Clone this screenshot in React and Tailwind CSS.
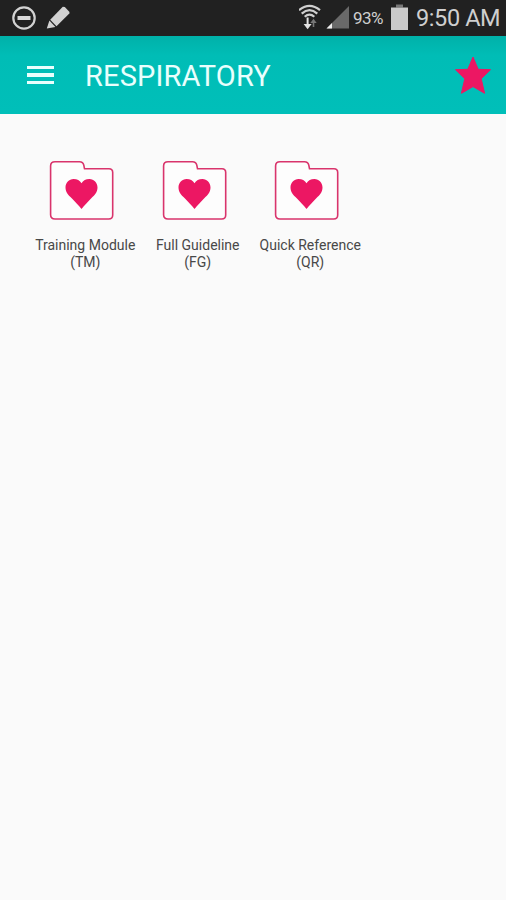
const folders = [
  { name: "Training Module", code: "TM" },
  { name: "Full Guideline", code: "FG" },
  { name: "Quick Reference", code: "QR" },
];

function StatusBar() {
  return (
    <div className="flex h-9 items-center bg-[#212121] text-[#cfcfcf]">
      <svg className="ml-[11px]" width="26" height="36" viewBox="0 0 26 36" fill="none">
        <circle cx="13" cy="18" r="10.7" stroke="#d2d2d2" strokeWidth="2.2" />
        <rect x="6.5" y="16" width="13" height="4" fill="#d8d8d8" />
      </svg>
      <svg className="ml-[9px]" width="26" height="36" viewBox="0 0 26 36" fill="#d2d2d2">
        <path d="M16.8 6.8 L18.8 7 L23.5 12 L23.3 13.5 L10.5 26.2 L4.2 19.8 Z" />
        <path d="M3.4 20.6 L9.4 27 L0.8 28.4 Z" />
      </svg>
      <svg className="ml-auto" width="23" height="36" viewBox="0 0 23 36" fill="none">
        <path d="M0 10.2 Q10.5 1.5 21 10.2" stroke="#d0d0d0" strokeWidth="2.2" />
        <path d="M2.7 13.6 Q10.5 6.8 18.3 13.6" stroke="#d0d0d0" strokeWidth="2.2" />
        <path d="M5.7 16.7 Q10.5 12.4 15.3 16.7" stroke="#d0d0d0" strokeWidth="2.2" />
        <path d="M8.6 17.5 V25" stroke="#e4e4e4" strokeWidth="2" />
        <path d="M4.6 24 H12.6 L8.6 29.3 Z" fill="#e4e4e4" />
        <path d="M14.5 27 V21" stroke="#777777" strokeWidth="1.6" />
        <path d="M11.3 23 H17.7 L14.5 18.8 Z" fill="#777777" />
      </svg>
      <svg className="ml-[4px]" width="24" height="36" viewBox="0 0 24 36">
        <path d="M23 6 V28.5 H0.5 Z" fill="#696969" />
        <path d="M6 23 V28.5 H0.5 Z" fill="#eeeeee" />
      </svg>
      <span className="ml-[3px] w-[33px] pt-px text-[17px] tracking-[-0.5px] whitespace-nowrap">93%</span>
      <svg className="ml-[4px]" width="19" height="36" viewBox="0 0 19 36">
        <rect x="6" y="4.5" width="7" height="3" fill="#777777" />
        <rect x="1" y="7.5" width="17" height="22.5" fill="#cacaca" />
      </svg>
      <span className="ml-[7px] w-[90px] pt-px text-[23.5px] tracking-[-0.4px] whitespace-nowrap">9:50 AM</span>
    </div>
  );
}

function Header() {
  return (
    <header className="flex h-[78px] items-center bg-linear-to-b from-[#00b1a9] via-[#00bdb6] via-25% to-[#00bfb9]">
      <button className="ml-[26.5px] flex w-[27px] flex-col gap-1" aria-label="Menu">
        <span className="h-[3.5px] w-full bg-[#e9fffd]" />
        <span className="h-[3.5px] w-full bg-[#e9fffd]" />
        <span className="h-[3.5px] w-full bg-[#e9fffd]" />
      </button>
      <h1 className="ml-[31.5px] pt-[3px] text-[29px] leading-none tracking-[0.15px] text-[#e9fffd]">RESPIRATORY</h1>
      <svg className="mr-[14px] ml-auto" width="38" height="42" viewBox="0 0 38 42">
        <path
          d="M19 3 L24.2 15.3 L36.5 15.7 L27.2 24.8 L30.6 39.3 L19 32.6 L7.4 39.3 L10.8 24.8 L1.5 15.7 L13.8 15.3 Z"
          fill="#ec1763"
          stroke="#ec1763"
          strokeLinejoin="round"
        />
      </svg>
    </header>
  );
}

function Folder({ name, code }) {
  return (
    <div className="flex flex-col items-center">
      <svg className="mr-[7.5px]" width="65" height="61" viewBox="0 0 65 61">
        <path
          d="M6 1.8 H30.5 Q34 1.8 34.8 5.2 L35.5 8.7 H60 Q63.7 8.7 63.7 12.4 V55 Q63.7 59 59.7 59 H6 Q1.6 59 1.6 54.8 V6 Q1.6 1.8 6 1.8 Z"
          fill="#fdfdfd"
          stroke="#d9346c"
          strokeWidth="1.6"
        />
        <path
          d="M32.5 49 C29.5 45.5 26.5 42 22.5 38 C19 34.8 16.5 32 16.5 27.5 C16.5 22.8 20 19 24.6 19 C28 19 31 20.5 32.5 23.2 C34 20.5 37 19 40.4 19 C45 19 48.5 22.8 48.5 27.5 C48.5 32 46 34.8 42.5 38 C38.5 42 35.5 45.5 32.5 49 Z"
          fill="#ec1763"
        />
      </svg>
      <p className="mt-4 text-center text-[14px] leading-[16.5px] whitespace-nowrap text-[#484848]">
        {name}
        <br />({code})
      </p>
    </div>
  );
}

export default function App() {
  return (
    <div className="h-[900px] w-[506px] overflow-hidden bg-[#fafafa] font-[Roboto,sans-serif]">
      <StatusBar />
      <Header />
      <main className="ml-[29px] grid w-[337.5px] grid-cols-3 pt-[46px]">
        {folders.map((folder) => (
          <Folder key={folder.code} name={folder.name} code={folder.code} />
        ))}
      </main>
    </div>
  );
}
